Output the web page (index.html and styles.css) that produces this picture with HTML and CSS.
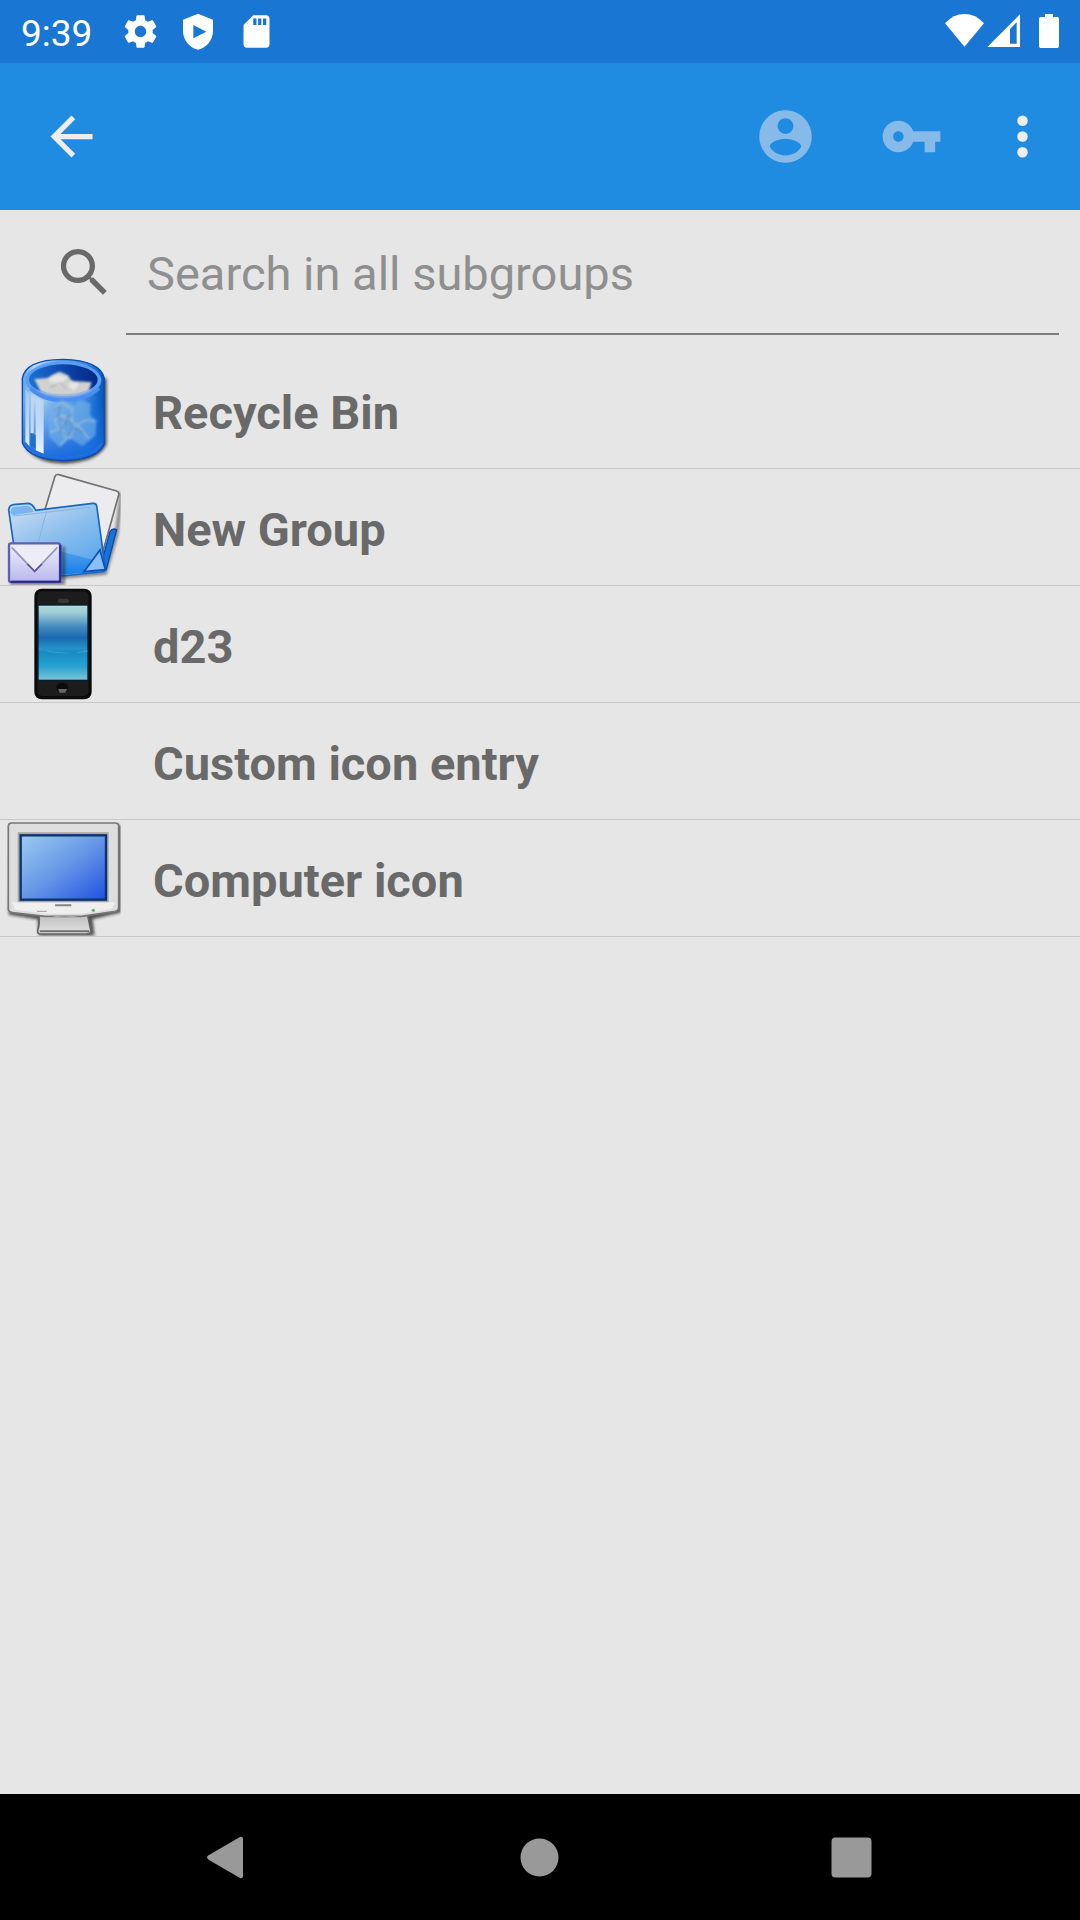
FILE: index.html
```html
<!DOCTYPE html>
<html lang="en">
<head>
<meta charset="utf-8">
<meta name="viewport" content="width=device-width, initial-scale=1">
<title>Groups</title>
<link rel="stylesheet" href="styles.css">
</head>
<body>
<div class="screen">
  <div class="status">
    <time class="clock">9:39</time>
    <div class="notices">
      <svg class="status-icon" viewBox="0 0 24 24"><path d="M19.43 12.98c.04-.32.07-.64.07-.98s-.03-.66-.07-.98l2.11-1.65c.19-.15.24-.42.12-.64l-2-3.46c-.12-.22-.39-.3-.61-.22l-2.49 1c-.52-.4-1.08-.73-1.69-.98l-.38-2.65A.488.488 0 0 0 14 2h-4c-.25 0-.46.18-.49.42l-.38 2.65c-.61.25-1.17.59-1.69.98l-2.49-1c-.23-.09-.49 0-.61.22l-2 3.46c-.13.22-.07.49.12.64l2.11 1.65c-.04.32-.07.65-.07.98s.03.66.07.98l-2.11 1.65c-.19.15-.24.42-.12.64l2 3.46c.12.22.39.3.61.22l2.49-1c.52.4 1.08.73 1.69.98l.38 2.65c.03.24.24.42.49.42h4c.25 0 .46-.18.49-.42l.38-2.65c.61-.25 1.17-.59 1.69-.98l2.49 1c.23.09.49 0 .61-.22l2-3.46c.12-.22.07-.49-.12-.64l-2.11-1.65zM12 15.5c-1.93 0-3.5-1.57-3.5-3.5s1.57-3.5 3.5-3.5 3.5 1.57 3.5 3.5-1.57 3.5-3.5 3.5z"/></svg>
      <svg class="status-icon" viewBox="537 36 117 117"><path fill-rule="evenodd" d="M594 41L639 59V92C639 120 620 143 594 149C568 143 549 120 549 92V59ZM580 75V115L619 95Z"/></svg>
      <svg class="status-icon" viewBox="0 0 24 24"><path d="M18 2h-8L4.020 8 4 20c0 1.100.9 2 2 2h12c1.100 0 2-.9 2-2V4c0-1.100-.9-2-2-2zm-6 6h-2V4h2v4zm3 0h-2V4h2v4zm3 0h-2V4h2v4z"/></svg>
    </div>
    <div class="signals">
      <svg class="status-icon" viewBox="675 36 117 117"><path d="M675 70Q700 42 733.500 42T792 70L733.500 140Z"/></svg>
      <svg class="status-icon" viewBox="795 36 117 117"><path fill-rule="evenodd" d="M802 141L900 43V141ZM870 87V131H890V67Z"/></svg>
      <svg class="battery" viewBox="954 36 66 117"><path d="M975 42H999V51H1012Q1017 51 1017 56V139Q1017 144 1012 144H962Q957 144 957 139V56Q957 51 962 51H975Z"/></svg>
    </div>
  </div>

  <header class="toolbar">
    <button class="tool back" type="button" aria-label="Back"><svg class="icon" viewBox="0 0 24 24"><path d="M20 11H7.830l5.590-5.590L12 4l-8 8 8 8 1.410-1.410L7.830 13H20v-2z"/></svg></button>
    <button class="tool faded" type="button" aria-label="Copy user name"><svg class="icon" viewBox="0 0 24 24"><path d="M12 2C6.480 2 2 6.480 2 12s4.480 10 10 10 10-4.480 10-10S17.520 2 12 2zm0 3c1.660 0 3 1.340 3 3s-1.340 3-3 3-3-1.340-3-3 1.340-3 3-3zm0 14.200c-2.500 0-4.710-1.280-6-3.220.03-1.990 4-3.080 6-3.080 1.990 0 5.970 1.090 6 3.080-1.290 1.940-3.500 3.220-6 3.220z"/></svg></button>
    <button class="tool faded" type="button" aria-label="Copy password"><svg class="icon" viewBox="0 0 24 24"><path d="M12.650 10C11.830 7.670 9.610 6 7 6c-3.310 0-6 2.690-6 6s2.690 6 6 6c2.610 0 4.830-1.670 5.650-4H17v4h4v-4h2v-4H12.650zM7 14c-1.100 0-2-.9-2-2s.9-2 2-2 2 .9 2 2-.9 2-2 2z"/></svg></button>
    <button class="tool more" type="button" aria-label="More options"><svg class="icon" viewBox="0 0 24 24"><circle cx="12" cy="6" r="2"/><circle cx="12" cy="12" r="2"/><circle cx="12" cy="18" r="2"/></svg></button>
  </header>

  <main class="content">
    <form class="search">
      <label class="search-label" for="query" aria-label="Search"><svg class="icon" viewBox="0 0 24 24"><path d="M15.500 14h-.79l-.28-.27C15.410 12.590 16 11.110 16 9.500 16 5.910 13.090 3 9.500 3S3 5.910 3 9.500 5.910 16 9.500 16c1.610 0 3.090-.59 4.230-1.570l.27.28v.79l5 4.990L20.490 19l-4.990-5zm-6 0C7.010 14 5 11.990 5 9.500S7.010 5 9.500 5 14 7.010 14 9.500 11.990 14 9.500 14z"/></svg></label>
      <input class="search-input" id="query" type="text" placeholder="Search in all subgroups">
    </form>

    <ul class="entries">
      <li class="entry">
        <svg class="picture" viewBox="0 21 378 348">
          <defs>
            <linearGradient id="bin-body"><stop offset="0" stop-color="#5a9fe4"/><stop offset=".15" stop-color="#b5d5f3"/><stop offset=".4" stop-color="#78b2ec"/><stop offset=".75" stop-color="#3c8ee2"/><stop offset=".92" stop-color="#1268cf"/><stop offset="1" stop-color="#0a52b8"/></linearGradient>
            <linearGradient id="bin-inner"><stop offset="0" stop-color="#1a72d4"/><stop offset=".6" stop-color="#0a3fa4"/><stop offset="1" stop-color="#032a86"/></linearGradient>
            <linearGradient id="bin-shade" x2="0" y2="1"><stop offset=".4" stop-color="#1668dc" stop-opacity="0"/><stop offset="1" stop-color="#1668dc"/></linearGradient>
            <linearGradient id="bin-shine" x2="0" y2="1"><stop offset="0" stop-color="#c5dcf2" stop-opacity=".5"/><stop offset="1" stop-color="#eef6ff"/></linearGradient>
            <filter id="soft" x="-20%" y="-20%" width="140%" height="140%"><feGaussianBlur stdDeviation="4"/></filter>
            <filter id="glass" x="-20%" y="-20%" width="140%" height="140%"><feGaussianBlur stdDeviation="2.5"/></filter>
          </defs>
          <path d="M74 100V302Q102 354 194 356Q296 352 320 298V100Z" fill="#1c1c24" opacity=".75" filter="url(#soft)"/>
          <path d="M67 100Q76 44 189 43Q302 46 313 100V296Q296 342 190 347Q88 344 67 294Z" fill="url(#bin-body)"/>
          <path d="M67 100Q76 44 189 43Q302 46 313 100V296Q296 342 190 347Q88 344 67 294Z" fill="url(#bin-shade)" stroke="#0c4cad" stroke-width="4"/>
          <ellipse cx="190" cy="106" rx="114" ry="57" fill="#5a9df4"/>
          <ellipse cx="190" cy="104" rx="103" ry="46" fill="url(#bin-inner)"/>
          <g filter="url(#glass)">
            <path d="M103 102L143 99L160 88L179 80L204 91L216 107L275 112L266 138Q230 154 180 152Q138 150 121 138Z" fill="#d1d1d1"/>
            <path d="M143 99L174 90L204 97L188 110L154 113ZM216 107L239 115L222 137L203 121Z" fill="#e6e6e6"/>
            <path d="M149 128L170 120M204 97L216 108L246 114M180 112L201 134" stroke="#a5a5a5" stroke-width="3" fill="none"/>
          </g>
          <path d="M91 130Q128 166 190 166Q263 164 297 129" fill="none" stroke="#4d8df0" stroke-width="11"/>
          <g filter="url(#glass)">
            <path d="M155 186L184 164L222 180L241 164L272 176L270 211L290 226L286 272L247 303L210 280L179 307L148 276L144 222Z" fill="#78b2e7" opacity=".6"/>
            <path d="M165 189L184 173L216 190L216 230L191 210L164 224L176 253L148 263M191 210L188 256L210 280L222 244L258 225L286 229M176 253L200 280L180 300M216 230L241 249L266 281" fill="none" stroke="#9ac1dc" stroke-width="6" opacity=".7"/>
            <path d="M164 195L181 183L174 218L199 231L178 260L205 272L220 248L201 218L217 207M220 248L250 263" fill="none" stroke="#527ca7" stroke-width="4" opacity=".6"/>
          </g>
          <path d="M76 132L88 146V306L76 290ZM92 147L101 153V264H92ZM107 158L131 166V326L107 316Z" fill="url(#bin-shine)"/>
          <path d="M91 265L107 270V312L91 302Z" fill="#226fc7"/>
          <path d="M76 294Q100 333 188 338Q278 336 304 296" fill="none" stroke="#2170e0" stroke-width="6"/>
        </svg>
        <span class="name">Recycle Bin</span>
      </li>
      <li class="entry">
        <svg class="picture" viewBox="0 12 378 348">
          <defs>
            <linearGradient id="folder" x2=".7" y2="1"><stop offset="0" stop-color="#d3dff5"/><stop offset=".5" stop-color="#8fc0ee"/><stop offset="1" stop-color="#58a5eb"/></linearGradient>
            <linearGradient id="folder-low" x2="0" y2="1"><stop offset="0" stop-color="#529fe9"/><stop offset="1" stop-color="#167de9"/></linearGradient>
            <linearGradient id="mail" x2="0" y2="1"><stop offset="0" stop-color="#f1f0f8"/><stop offset="1" stop-color="#b9b8ee"/></linearGradient>
            <clipPath id="folder-clip"><path d="M0 12H362V360H0Z"/></clipPath>
          </defs>
          <g clip-path="url(#folder-clip)">
            <path d="M180 336L316 324L350 207L364 92L354 83" fill="none" stroke="#333" stroke-width="10" opacity=".6" filter="url(#soft)"/>
            <path d="M165 34Q168 27 176 29L350 78Q358 81 356 90L324 205L300 290L100 250Z" fill="#ececee" stroke="#707070" stroke-width="5"/>
            <path d="M330 200Q337 188 350 194L319 314Q310 320 298 316Z" fill="#1673db" stroke="#084aa7" stroke-width="4"/>
            <path d="M26 134Q28 121 40 119L84 115Q98 116 107 136L278 115Q288 114 290 122L316 310Q315 320 304 321L188 333L44 260Z" fill="url(#folder)" stroke="#1767bf" stroke-width="5"/>
            <path d="M181 259L282 285L309 306L307 318L184 329Z" fill="url(#folder-low)"/>
            <path d="M31 142Q31 128 42 125L82 122Q94 124 101 141L38 151Z" fill="#75b5f3"/>
            <path d="M40 153L270 127M140 137L115 232" fill="none" stroke="#86b4df" stroke-width="3"/>
            <path d="M300 255L316 314L252 320Z" fill="#8ac0f5" stroke="#084ebd" stroke-width="5"/>
            <path d="M30 355H190V245" fill="none" stroke="#222" stroke-width="9" opacity=".6" filter="url(#soft)"/>
            <rect x="27" y="235" width="153" height="116" rx="6" fill="url(#mail)" stroke="#5f5db4" stroke-width="7"/>
            <path d="M181 239V350H32" fill="none" stroke="#29268f" stroke-width="6"/>
            <path d="M35 247L104 319L172 247" fill="#ededf6" stroke="#9594be" stroke-width="5"/>
            <path d="M82 297L104 319L126 297" fill="none" stroke="#5951a6" stroke-width="5"/>
          </g>
        </svg>
        <span class="name">New Group</span>
      </li>
      <li class="entry">
        <svg class="picture" viewBox="0 18 378 348">
          <defs><linearGradient id="phone" x2="0" y2="1"><stop offset="0" stop-color="#afdcdc"/><stop offset=".1" stop-color="#9ccbd5"/><stop offset=".27" stop-color="#4a8fc2"/><stop offset=".43" stop-color="#1a68b0"/><stop offset=".58" stop-color="#2492c9"/><stop offset=".64" stop-color="#188cc4"/><stop offset=".82" stop-color="#28a1d2"/><stop offset="1" stop-color="#7cc5d8"/></linearGradient></defs>
          <rect x="103" y="26" width="172" height="332" rx="22" fill="#0b0b0b"/>
          <rect x="112" y="34" width="154" height="314" rx="15" fill="#1c1c1c"/>
          <rect x="112" y="73" width="154" height="231" fill="#061e30"/>
          <rect x="116" y="77" width="146" height="222" fill="url(#phone)"/>
          <path d="M116 205Q189 234 262 210V216Q189 224 116 208Z" fill="#5bb4d8" opacity=".5"/>
          <rect x="174" y="56" width="32" height="13" rx="5" fill="#383838"/>
          <ellipse cx="187" cy="322" rx="18" ry="14" fill="#0b0b0b"/>
          <path d="M174 327H201L196 338H179Z" fill="#686868"/>
        </svg>
        <span class="name">d23</span>
      </li>
      <li class="entry">
        <span class="picture"></span>
        <span class="name">Custom icon entry</span>
      </li>
      <li class="entry">
        <svg class="picture" viewBox="0 15 378 348">
          <defs>
            <linearGradient id="display" x2="1" y2="1"><stop offset="0" stop-color="#9bcbef"/><stop offset=".5" stop-color="#6697e7"/><stop offset="1" stop-color="#2050e1"/></linearGradient>
            <linearGradient id="stand" x2="0" y2="1"><stop offset="0" stop-color="#bfbfbf"/><stop offset="1" stop-color="#e2e2e2"/></linearGradient>
            <clipPath id="monitor-clip"><path d="M0 15H362V363H0Z"/></clipPath>
          </defs>
          <g clip-path="url(#monitor-clip)">
            <path d="M34 34H360V290L274 310L280 358H120L116 310L30 296Z" fill="#222" stroke="#222" stroke-width="7" opacity=".75" filter="url(#soft)"/>
            <path d="M117 300H263L273 350Q270 357 260 357H121Q112 356 113 347Q120 325 117 300Z" fill="url(#stand)" stroke="#656565" stroke-width="5"/>
            <path d="M119 349H268" stroke="#707070" stroke-width="6"/>
            <path d="M25 34Q25 24 35 24H346Q356 24 356 34V278Q356 287 346 289L245 304H135L37 293Q25 290 25 282Z" fill="#dedede" stroke="#777" stroke-width="5"/>
            <path d="M36 262H346L335 282L243 296H136L45 284Z" fill="#efefef"/>
            <path d="M53 52H326V262H53Z" fill="#a6a6a6"/>
            <rect x="62" y="61" width="256" height="193" fill="url(#display)" stroke="#06346e" stroke-width="7"/>
            <path d="M165 271H214" stroke="#858585" stroke-width="6"/>
            <path d="M111 289H140M158 302Q190 311 232 302" fill="none" stroke="#aaa" stroke-width="4"/>
            <circle cx="280" cy="286" r="5" fill="#65b765"/>
          </g>
        </svg>
        <span class="name">Computer icon</span>
      </li>
    </ul>
  </main>

  <nav class="system">
    <button class="key" type="button" aria-label="Back"><svg class="icon" viewBox="0 0 63 63"><path d="M12 29L43 11Q46 10 46 13V50Q46 53 43 52L12 34Q8 31 12 29Z"/></svg></button>
    <button class="key" type="button" aria-label="Home"><svg class="icon" viewBox="0 0 63 63"><circle cx="31.500" cy="31.500" r="19"/></svg></button>
    <button class="key" type="button" aria-label="Recent apps"><svg class="icon" viewBox="0 0 63 63"><rect x="11.500" y="11.500" width="40" height="40" rx="4"/></svg></button>
  </nav>
</div>
</body>
</html>
```
FILE: styles.css
```css
* {
  box-sizing: border-box;
}

body {
  margin: 0;
  background: #e6e6e6;
  color: #696969;
  font-family: Roboto, "Liberation Sans", sans-serif;
  font-size: 47px;
}

svg {
  display: block;
  flex: none;
  fill: currentColor;
}

button {
  display: flex;
  align-items: center;
  justify-content: center;
  padding: 0;
  border: 0;
  background: none;
  color: inherit;
}

.screen {
  display: flex;
  flex-direction: column;
  min-height: 100vh;
}

.icon {
  width: 63px;
  height: 63px;
}

/* Status bar */

.status {
  display: flex;
  align-items: center;
  height: 63px;
  padding: 0 20px 0 21px;
  background: #1976d2;
  color: #fff;
}

.clock {
  width: 100px;
  padding-top: 4px;
  font-size: 37px;
  line-height: 44px;
}

.notices {
  display: flex;
  gap: 19px;
}

.signals {
  display: flex;
  gap: 1px;
  margin-left: auto;
}

.status-icon {
  width: 39px;
  height: 39px;
}

.battery {
  width: 22px;
  height: 39px;
  margin-left: 13px;
}

/* Toolbar */

.toolbar {
  display: flex;
  height: 147px;
  padding-right: 10px;
  background: #1f8ce1;
  color: #ededed;
}

.tool {
  width: 126px;
  padding-bottom: 1px;
}

.back {
  width: 142px;
  margin-right: auto;
}

.more {
  width: 96px;
  padding-bottom: 0;
}

.faded {
  color: #87bae8;
}

/* Search and entries */

.content {
  flex: 1;
}

.search {
  display: flex;
  height: 142px;
  padding-right: 21px;
}

.search-label {
  width: 126px;
  padding: 31px 0 0 53px;
}

.search-input {
  flex: 1;
  min-width: 0;
  height: 125px;
  padding: 4px 21px 0;
  border: 0;
  border-bottom: 2px solid #7c7c7c;
  outline: 0;
  background: none;
  color: inherit;
  font: inherit;
}

.search-input::placeholder {
  color: #8f8f8f;
  opacity: 1;
}

.entries {
  margin: 0;
  padding: 0;
  list-style: none;
}

.entry {
  display: flex;
  align-items: center;
  gap: 27px;
  border-bottom: 1px solid #c9c9c9;
}

.picture {
  width: 126px;
  height: 116px;
}

.name {
  padding-top: 4px;
  font-weight: 700;
}

/* System navigation */

.system {
  display: grid;
  grid-template-columns: repeat(3, 1fr);
  height: 126px;
  padding: 0 73px;
  background: #000;
  color: #999;
}
```
